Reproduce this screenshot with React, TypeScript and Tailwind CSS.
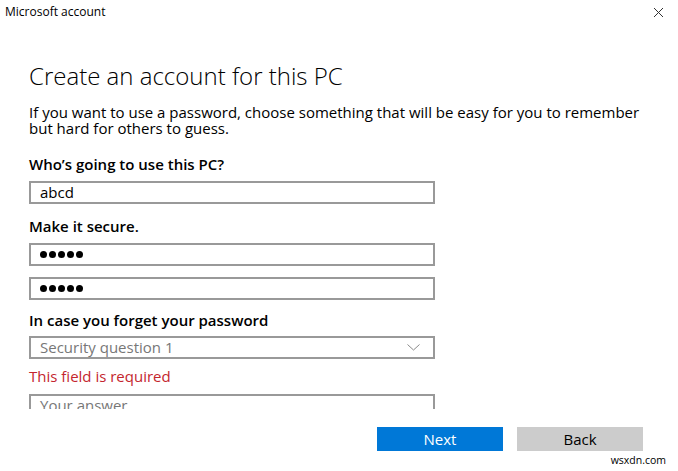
import React from "react";

const font = { fontFamily: '"Open Sans", "Noto Sans", Arial, sans-serif' };

function Field({ children, className = "" }: { children?: React.ReactNode; className?: string }) {
  return (
    <div className={`h-[23px] w-[406px] border-2 border-[#999999] bg-white flex items-center px-[9px] ${className}`}>
      {children}
    </div>
  );
}

function Dots() {
  return (
    <div className="flex gap-[2px]">
      {[0, 1, 2, 3, 4].map((i) => (
        <span key={i} className="block w-[7px] h-[7px] rounded-full bg-black" />
      ))}
    </div>
  );
}

export default function App() {
  return (
    <div className="w-[678px] h-[471px] bg-white relative overflow-hidden text-black" style={font}>
      {/* title bar */}
      <div className="h-[24px] flex items-center justify-between pl-[5px] pr-[14px]">
        <span className="text-[12px] leading-none">Microsoft account</span>
        <svg width="11" height="11" viewBox="0 0 11 11" className="text-[#333]">
          <path d="M1 1 L10 10 M10 1 L1 10" stroke="currentColor" strokeWidth="1" />
        </svg>
      </div>

      {/* scrolling body */}
      <div className="h-[385px] overflow-hidden pl-[29px]">
        <h1 className="mt-[38px] text-[24px] leading-[28px] font-light">
          Create an account for this PC
        </h1>
        <p className="mt-[14px] text-[15px] leading-[16px] w-[640px]">
          <span className="block">If you want to use a password, choose something that will be easy for you to remember</span>
          <span className="block">but hard for others to guess.</span>
        </p>
        <div className="mt-[19px] text-[15px] leading-[18px] font-semibold">Who’s going to use this PC?</div>
        <Field className="mt-[8px]">
          <span className="text-[15px] leading-none">abcd</span>
        </Field>
        <div className="mt-[13px] text-[15px] leading-[18px] font-semibold">Make it secure.</div>
        <Field className="mt-[8px]">
          <Dots />
        </Field>
        <Field className="mt-[11px]">
          <Dots />
        </Field>
        <div className="mt-[11px] text-[15px] leading-[18px] font-semibold">In case you forget your password</div>
        <Field className="mt-[7px] justify-between">
          <span className="text-[15px] leading-none text-[#777]">Security question 1</span>
          <svg width="13" height="7" viewBox="0 0 13 7" className="mr-[4px]">
            <path d="M0.5 0.5 L6.5 6 L12.5 0.5" stroke="#8a8a8a" strokeWidth="1" fill="none" />
          </svg>
        </Field>
        <div className="mt-[8px] text-[15px] leading-[18px] text-[#c4262e]">This field is required</div>
        <div className="mt-[9px] h-[23px] w-[406px] border-2 border-[#999999] px-[9px] flex items-center">
          <span className="text-[15px] leading-none text-[#777]">Your answer</span>
        </div>
      </div>

      {/* buttons */}
      <div className="mt-[18px] flex justify-end gap-[14px] pr-[35px]">
        <button className="w-[126px] h-[24px] bg-[#0078d7] text-white text-[15px] leading-none" style={font}>
          Next
        </button>
        <button className="w-[126px] h-[24px] bg-[#cccccc] text-black text-[15px] leading-none" style={font}>
          Back
        </button>
      </div>

      <div className="absolute right-[12px] bottom-[4px] text-[10.5px] leading-[14px] text-black">
        wsxdn.com
      </div>
    </div>
  );
}
